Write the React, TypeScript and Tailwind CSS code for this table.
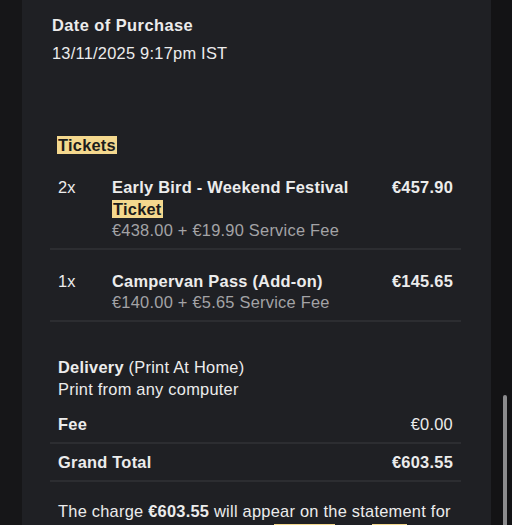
const items = [
  {
    qty: '2x',
    name: (
      <>
        Early Bird - Weekend Festival{' '}
        <span className="bg-[#f4d88e] px-px text-[#1c1c1c]">Ticket</span>
      </>
    ),
    detail: '€438.00 + €19.90 Service Fee',
    price: '€457.90',
  },
  {
    qty: '1x',
    name: <>Campervan Pass (Add-on)</>,
    detail: '€140.00 + €5.65 Service Fee',
    price: '€145.65',
  },
];

const Divider = () => <div className="h-[2px] bg-[#2c2d31]" />;

export default function App() {
  return (
    <div
      className="flex h-[525px] w-[512px] overflow-hidden bg-[#161618] text-[16.4px] tracking-[0.25px] text-[#ececec]"
      style={{ fontFamily: '"Liberation Sans", Arial, sans-serif' }}
    >
      <div className="w-[22px] flex-none" />
      <main className="w-[469px] flex-none bg-[#1f2024] pl-[28px] pr-[30px] pt-[13px]">
        <div className="pl-[2px] leading-[24px]">
          <h2 className="font-bold tracking-[0.45px]">Date of Purchase</h2>
          <p className="mt-[4px]">13/11/2025 9:17pm IST</p>
        </div>

        <h3 className="mt-[70px] px-[7px] font-bold leading-[21px]">
          <span className="bg-[#f4d88e] px-px text-[#1c1c1c]">Tickets</span>
        </h3>

        <ul>
          {items.map((item) => (
            <li key={item.qty + item.price}>
              <div className="flex px-[8px] pb-[6px] pt-[21px] leading-[21.5px]">
                <span className="w-[54px] flex-none">{item.qty}</span>
                <div className="flex-1">
                  <p className="w-[240px] font-bold">{item.name}</p>
                  <p className="text-[#a3a3a6]">{item.detail}</p>
                </div>
                <span className="flex-none font-bold">{item.price}</span>
              </div>
              <Divider />
            </li>
          ))}
        </ul>

        <div className="mt-[34px] px-[8px] leading-[22px]">
          <p>
            <span className="font-bold">Delivery</span> (Print At Home)
          </p>
          <p>Print from any computer</p>
        </div>

        <div className="mt-[6px]">
          <div className="flex justify-between px-[8px] py-[7px] leading-[22px]">
            <span className="font-bold">Fee</span>
            <span>€0.00</span>
          </div>
          <Divider />
          <div className="flex justify-between px-[8px] py-[7px] leading-[22px]">
            <span className="font-bold">Grand Total</span>
            <span className="font-bold">€603.55</span>
          </div>
          <Divider />
        </div>

        <p className="mt-[18px] px-[8px] leading-[22px]">
          The charge <span className="font-bold">€603.55</span> will appear on the statement for
          your debit card as shown by{' '}
          <span className="bg-[#f4d88e] text-[#1c1c1c]">Eventim</span> and{' '}
          <span className="bg-[#f4d88e] px-px text-[#1c1c1c]">EVT</span>.
        </p>
      </main>
      <div className="relative flex-1 bg-[#131315]">
        <div className="absolute left-[12px] top-[395px] h-[140px] w-[4px] rounded-full bg-[#8c8c8e]" />
      </div>
    </div>
  );
}
